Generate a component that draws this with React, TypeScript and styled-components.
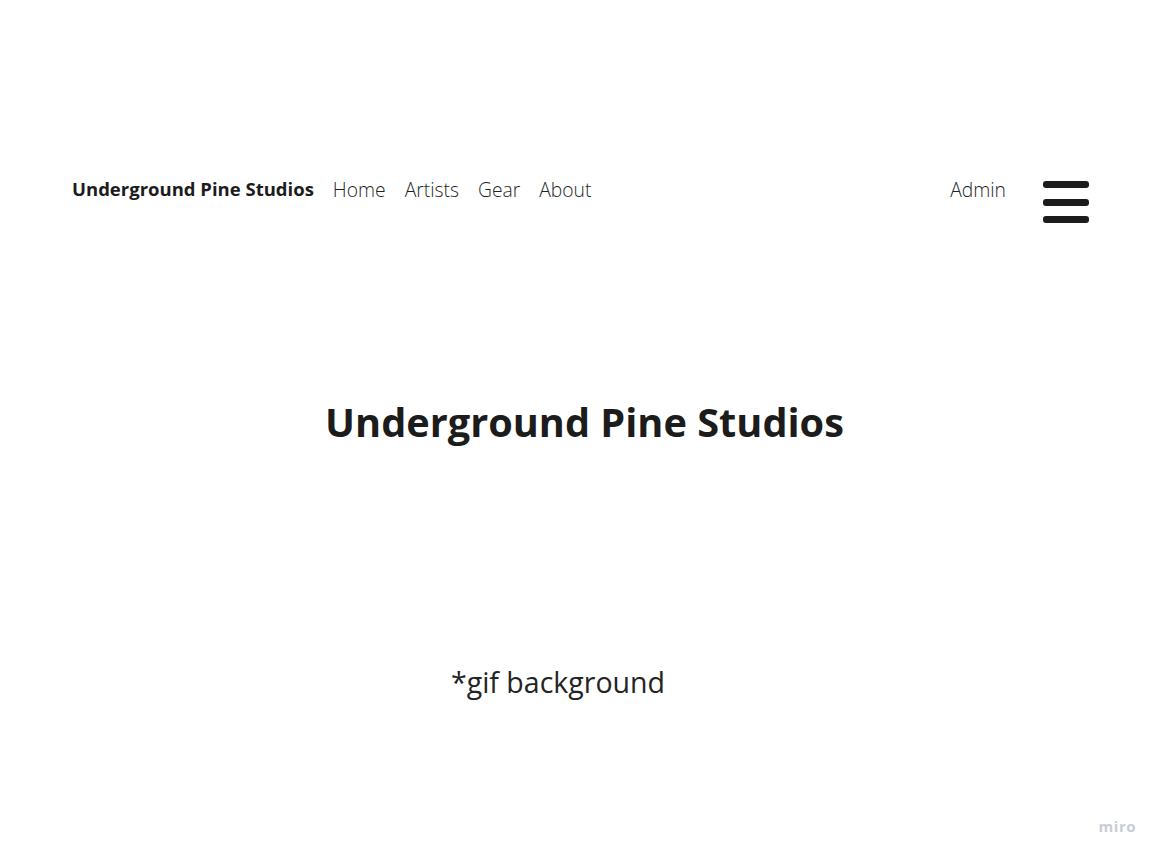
import styled, { createGlobalStyle } from "styled-components";

const GlobalStyle = createGlobalStyle`
  html, body {
    margin: 0;
    padding: 0;
    background: #ffffff;
    font-family: "Open Sans", "Liberation Sans", sans-serif;
    color: #1c1c1c;
  }
`;

const Page = styled.div`
  width: 1162px;
  height: 860px;
  position: relative;
  overflow: hidden;
  display: flex;
  flex-direction: column;
`;

const Nav = styled.nav`
  display: flex;
  align-items: flex-start;
  padding: 176px 72px 0 72px;
`;

const Brand = styled.a`
  font-size: 18.5px;
  font-weight: 700;
  color: #1c1c1c;
  margin-right: 19px;
`;

const Links = styled.ul`
  display: flex;
  gap: 19px;
  list-style: none;
  margin: 0;
  padding: 0;
  flex: 1;
`;

const NavLink = styled.li`
  font-size: 19.3px;
  font-weight: 300;
  color: #1f1f1f;
`;

const Admin = styled.span`
  font-size: 19.3px;
  font-weight: 300;
  color: #1f1f1f;
  margin-right: 36px;
`;

const Burger = styled.button`
  border: none;
  background: none;
  padding: 0;
  width: 48px;
  height: 42px;
  display: flex;
  flex-direction: column;
  justify-content: space-between;
  margin-top: 5px;
  span {
    display: block;
    height: 7px;
    border-radius: 3px;
    background: #1c1c1c;
    margin: 0 1px;
  }
`;

const Hero = styled.h1`
  margin: 172px 0 0 0;
  text-align: center;
  font-size: 39.7px;
  font-weight: 700;
  color: #1c1c1c;
  padding-left: 7px;
`;

const Note = styled.p`
  margin: 214px 0 0 451px;
  font-size: 28.5px;
  font-weight: 400;
  color: #242424;
`;

const Watermark = styled.span`
  position: absolute;
  right: 26px;
  bottom: 24px;
  font-size: 15px;
  font-weight: 700;
  letter-spacing: 0.5px;
  color: #c9ccd6;
`;

export default function App() {
  return (
    <Page>
      <GlobalStyle />
      <Nav>
        <Brand>Underground Pine Studios</Brand>
        <Links>
          <NavLink>Home</NavLink>
          <NavLink>Artists</NavLink>
          <NavLink>Gear</NavLink>
          <NavLink>About</NavLink>
        </Links>
        <Admin>Admin</Admin>
        <Burger aria-label="menu">
          <span />
          <span />
          <span />
        </Burger>
      </Nav>
      <Hero>Underground Pine Studios</Hero>
      <Note>*gif background</Note>
      <Watermark>miro</Watermark>
    </Page>
  );
}
